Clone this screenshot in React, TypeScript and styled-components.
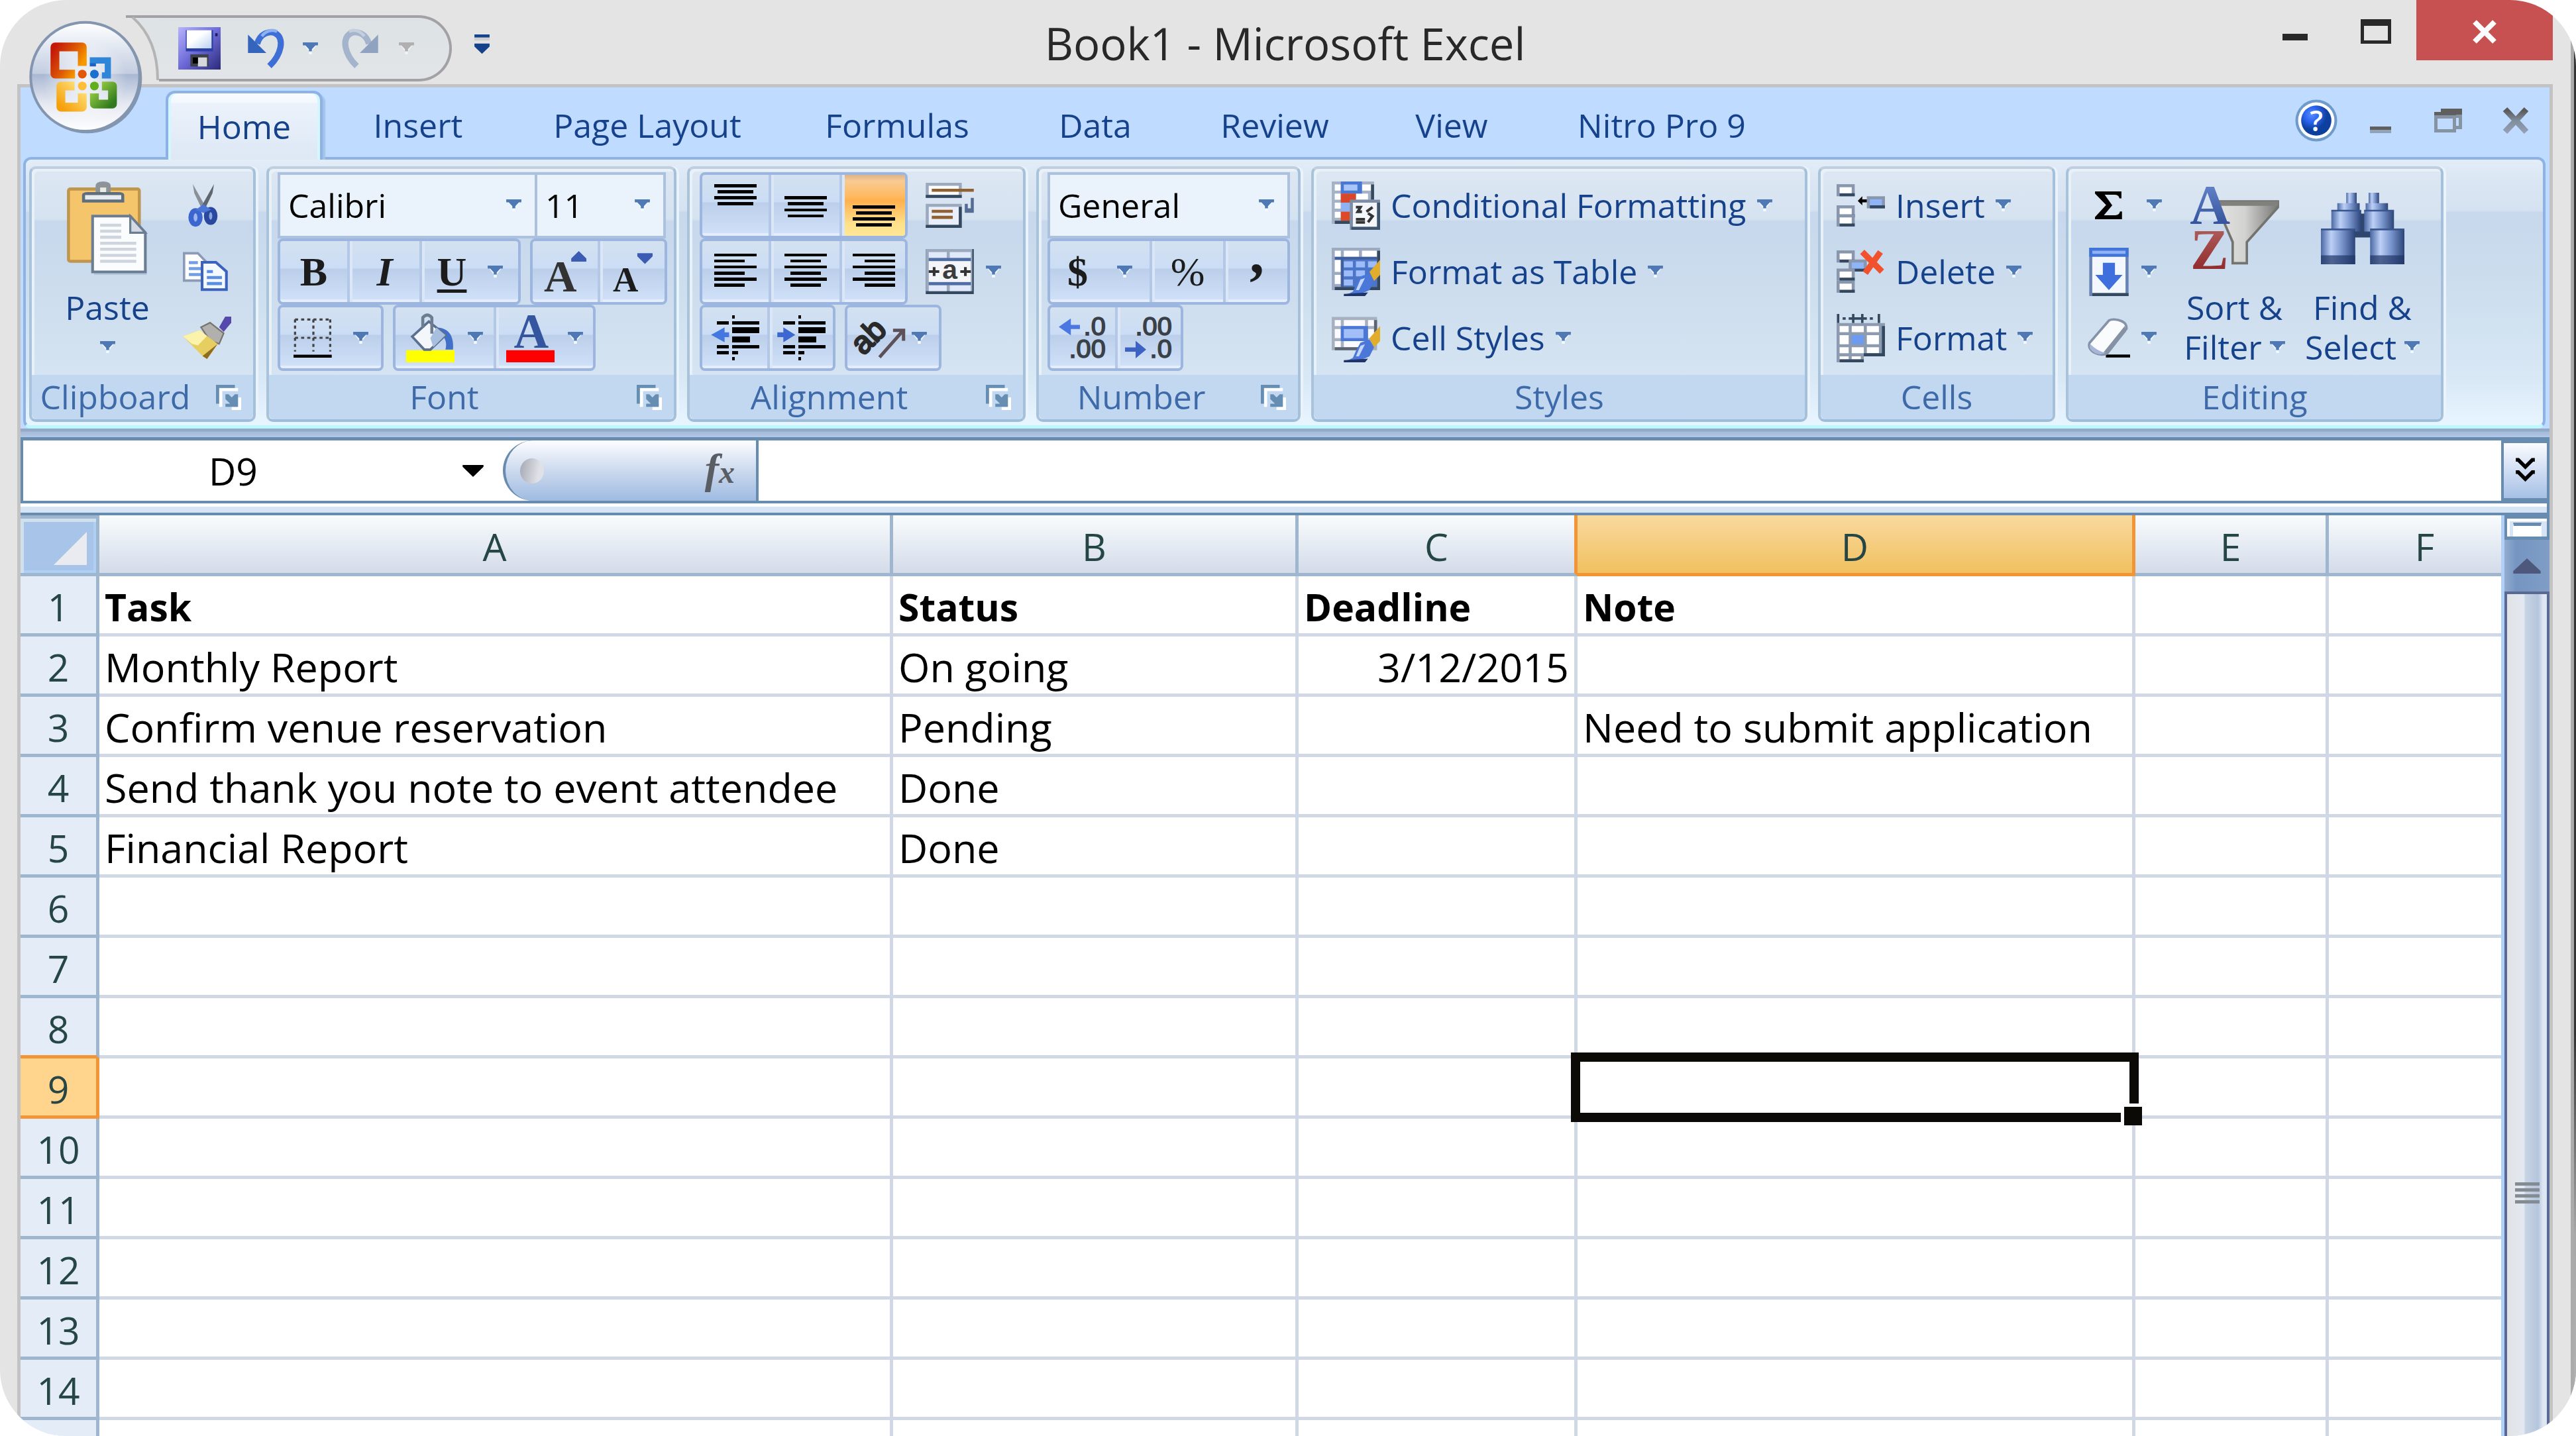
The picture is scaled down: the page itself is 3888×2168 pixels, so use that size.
import React from "react";
import styled, { createGlobalStyle, css } from "styled-components";

const Global = createGlobalStyle`
  * { box-sizing: border-box; }
  html, body { margin: 0; padding: 0; background: #ffffff; }
  body { font-family: "Open Sans", "Noto Sans", sans-serif; font-size: 50px; color: #000; }
  button, input, select { font: inherit; color: inherit; margin: 0; padding: 0; border: 0; background: none; border-radius: 0; outline: none; }
  svg { display: block; flex: none; overflow: visible; }
`;

/* ---------- window frame ---------- */

const Window = styled.div`
  position: relative;
  display: flex;
  flex-direction: column;
  height: 100vh;
  overflow: hidden;
  border-radius: 100px;
  background: #e4e4e4;
  padding: 0 35px 0 26px;

  &::after {
    content: "";
    position: absolute;
    top: 0;
    right: 0;
    bottom: 0;
    width: 8px;
    background:
      linear-gradient(#333 0, #333 72%, #a8a8a8 86%, #b4b4b4 100%) right / 3px 100% no-repeat,
      #ababab;
  }
`;

const TitleBar = styled.header`
  display: grid;
  grid-template-columns: 1fr auto 1fr;
  height: 127px;
  flex: none;
  margin-right: -9px;
  padding-right: 9px;
`;

const Title = styled.h1`
  margin: 0;
  padding-top: 20px;
  font-size: 67px;
  line-height: 90px;
  font-weight: 400;
  color: #282828;
  white-space: nowrap;
`;

const WindowButtons = styled.div`
  display: flex;
  justify-content: flex-end;
  align-items: flex-start;
`;

const WindowButton = styled.button<{ $close?: boolean }>`
  display: flex;
  align-items: center;
  justify-content: center;
  width: ${(p) => (p.$close ? 206 : 122)}px;
  height: 91px;
  padding-top: 4px;
  background: ${(p) => (p.$close ? "#c75050" : "transparent")};
`;

const QuickAccess = styled.div`
  display: flex;
  height: 100px;
  margin-top: 23px;
  padding-left: 164px;
`;

const QuickPill = styled.div`
  display: flex;
  align-items: center;
  width: 442px;
  margin-right: 34px;
  padding-left: 29px;
  border: 4px solid #a3a1a6;
  border-left: 0;
  border-radius: 0 50px 50px 0;
  background: linear-gradient(#dde2e4, #e1e5e7);
`;

const QuickButton = styled.button<{ $w: number }>`
  display: flex;
  align-items: center;
  width: ${(p) => p.$w}px;
  height: 90px;
`;

const OfficeButton = styled.button`
  position: absolute;
  left: 45px;
  top: 32px;
  width: 172px;
  height: 172px;
  z-index: 5;
`;

const Client = styled.div`
  display: flex;
  flex-direction: column;
  flex: 1;
  min-height: 0;
  border: 5px solid #c3c3c3;
  border-bottom: 0;
  background: #bfdbff;
`;

/* ---------- tabs ---------- */

const TabBar = styled.nav`
  display: flex;
  flex: none;
  height: 105px;
  padding-left: 219px;
`;

const Tab = styled.button<{ $w: number; $active?: boolean }>`
  width: ${(p) => p.$w}px;
  height: 104px;
  margin-top: 5px;
  color: #15428b;
  white-space: nowrap;
  ${(p) =>
    p.$active &&
    css`
      position: relative;
      z-index: 1;
      margin-right: 16px;
      border: 4px solid #8db2e3;
      border-bottom: 0;
      border-radius: 14px 14px 0 0;
      background: linear-gradient(#f8fbff 0, #f3f8fe 14%, #ebf2fb 15%, #dde8f5 100%);
      box-shadow: inset 4px 0 #d4f6ff, inset -4px 0 #d4f6ff, 4px 4px 2px #a3c2ea;
      clip-path: inset(0 -8px 0 0);
    `}
`;

const DocButtons = styled.div`
  display: flex;
  margin-left: auto;
  height: 100px;
`;

const DocButton = styled.button<{ $w: number; $end?: number }>`
  display: flex;
  align-items: center;
  justify-content: center;
  width: ${(p) => p.$w}px;
  margin-right: ${(p) => p.$end ?? 0}px;
`;

/* ---------- ribbon ---------- */

const Ribbon = styled.section`
  display: flex;
  flex: none;
  gap: 16px;
  height: 410px;
  margin: 0 6px 0 4px;
  padding: 10px 0 0 5px;
  border: 4px solid #8db2e3;
  border-bottom: 5px solid #bdf7ff;
  border-radius: 12px;
  background: linear-gradient(#e3edf8 0, #dae6f3 8%, #d5e2f1 19%, #c7d8ed 20%, #cddeee 50%, #d8e8f5 82%, #e7f5ff 100%);
`;

const RibbonShadow = styled.div`
  flex: none;
  height: 13px;
  background: linear-gradient(#93a9c6 0, #93a9c6 4px, #a5b9d9 5px, #b2c8e8 100%);
`;

const GroupBox = styled.div<{ $w: number }>`
  display: flex;
  flex-direction: column;
  width: ${(p) => p.$w}px;
  height: 386px;
  border: 4px solid;
  border-color: #bfcfde #a4c0da #9dbdda #a9c3db;
  border-radius: 10px;
  background: linear-gradient(#dde7f3 0, #d5e2f0 20%, #c7d8ed 21%, #cedeee 55%, #d8e8f5 100%);
  box-shadow: inset 4px 4px #e8f0f8, 4px 0 #eaf3fb;
`;

const GroupBody = styled.div<{ $left?: number }>`
  display: flex;
  flex: 1;
  min-height: 0;
  padding-left: ${(p) => p.$left ?? 0}px;
`;

const GroupFooter = styled.div`
  display: flex;
  align-items: center;
  height: 67px;
  border-radius: 0 0 8px 8px;
  background: #c1d8f0;
  color: #3e6aaa;
`;

const GroupLabel = styled.span<{ $shared?: boolean }>`
  flex: 1;
  padding-right: ${(p) => (p.$shared ? 26 : 0)}px;
  text-align: center;
  line-height: 67px;
`;

const Launcher = styled.button`
  width: 38px;
  height: 38px;
  margin-right: 18px;
`;

const Rows = styled.div`
  display: flex;
  flex-direction: column;
  padding-top: 5px;
`;

const Row = styled.div<{ $gap?: number }>`
  display: flex;
  height: 100px;
  gap: ${(p) => p.$gap ?? 14}px;
`;

const Segments = styled.div`
  display: flex;
  border: 4px solid #9cb6df;
  border-radius: 8px;
  overflow: hidden;
  background: linear-gradient(#d3e1f0 0, #cbddf5 44%, #bccfea 46%, #cfe0f8 96%, #e3edfb 96%);
`;

const Segment = styled.button<{ $w: number; $on?: boolean; $gap?: number }>`
  display: flex;
  align-items: center;
  justify-content: center;
  gap: ${(p) => p.$gap ?? 20}px;
  width: ${(p) => p.$w}px;
  & + & {
    border-left: 4px solid #b3c8e6;
    box-shadow: inset 4px 0 #dbe7f7;
  }
  ${(p) =>
    p.$on &&
    css`
      && {
        border-left: 0;
        box-shadow: none;
      }
      background: linear-gradient(#dcb28a 0, #f8cb92 10%, #ffb95f 36%, #ffb04e 42%, #ffe08a 80%, #ffe796 100%);
    `}
`;

const PlainButton = styled.button<{ $w: number }>`
  display: flex;
  align-items: center;
  gap: 18px;
  width: ${(p) => p.$w}px;
`;

const Combo = styled.label<{ $w: number; $joined?: boolean }>`
  display: grid;
  grid-template-columns: 1fr 23px;
  align-items: center;
  width: ${(p) => p.$w}px;
  height: 100px;
  padding-right: 20px;
  border: 4px solid #abc1de;
  border-left-width: ${(p) => (p.$joined ? 0 : 4)}px;
  background: #eaf2fb;

  select {
    appearance: none;
    grid-area: 1 / 1 / 2 / 3;
    width: 100%;
    height: 92px;
    padding-left: 12px;
  }
  svg {
    grid-area: 1 / 2;
    pointer-events: none;
  }
`;

const Glyph = styled.span<{ $size: number; $bold?: boolean; $italic?: boolean; $line?: boolean }>`
  font-family: "Liberation Serif", serif;
  font-size: ${(p) => p.$size}px;
  line-height: 76px;
  font-weight: ${(p) => (p.$bold ? 700 : 400)};
  font-style: ${(p) => (p.$italic ? "italic" : "normal")};
  text-decoration: ${(p) => (p.$line ? "underline" : "none")};
  text-decoration-thickness: 5px;
  text-underline-offset: 6px;
  color: #1c1c1c;
`;

const CommandButton = styled.button`
  display: flex;
  align-items: center;
  gap: 16px;
  height: 100px;
  color: #15428b;
  white-space: nowrap;
`;

const LargeButton = styled.button<{ $w: number }>`
  display: flex;
  flex-direction: column;
  align-items: center;
  width: ${(p) => p.$w}px;
  color: #15428b;
`;

const LargeIcon = styled.span`
  display: flex;
  align-items: center;
  height: 179px;
`;

const LargeLine = styled.span`
  display: flex;
  align-items: center;
  gap: 12px;
  height: 60px;
  line-height: 60px;
  white-space: nowrap;
`;

const SmallColumn = styled.div<{ $w: number; $left?: number }>`
  display: flex;
  flex-direction: column;
  width: ${(p) => p.$w}px;
  padding: 5px 0 0 ${(p) => p.$left ?? 0}px;
`;

const SmallButton = styled.button<{ $gap?: number }>`
  display: flex;
  align-items: center;
  gap: ${(p) => p.$gap ?? 18}px;
  height: 100px;
`;

const IconSlot = styled.span`
  display: flex;
  justify-content: center;
  width: 62px;
`;

/* ---------- formula bar ---------- */

const FormulaBar = styled.div`
  display: flex;
  flex: none;
  height: 100px;
  border: 4px solid #688caf;
  border-top-width: 5px;
  background: #ffffff;
  font-size: 57px;
`;

const NameInput = styled.input`
  width: 634px;
  height: 91px;
  text-align: center;
`;

const NameDrop = styled.button`
  display: flex;
  align-items: center;
  justify-content: center;
  width: 90px;
`;

const FxPill = styled.div`
  display: flex;
  align-items: center;
  justify-content: space-between;
  width: 386px;
  padding: 0 32px 0 22px;
  border: solid #688caf;
  border-width: 0 4px 0 4px;
  border-radius: 50px 0 0 50px;
  background: linear-gradient(#fdfdff, #c7d6ec 55%, #9fbbe2);
`;

const Knob = styled.span`
  width: 36px;
  height: 38px;
  border-radius: 50%;
  background: linear-gradient(100deg, #a4a8b2, #dfe1e6 75%);
`;

const FxButton = styled.button`
  font-family: "Liberation Serif", serif;
  font-style: italic;
  font-weight: 700;
  font-size: 64px;
  line-height: 80px;
  color: #5a5d63;
  small { font-size: 48px; }
`;

const FormulaInput = styled.input`
  flex: 1;
  min-width: 0;
  padding: 0 16px;
`;

const ExpandButton = styled.button`
  display: flex;
  align-items: center;
  justify-content: center;
  width: 69px;
  border: solid #688caf;
  border-width: 4px 0 4px 4px;
  background: linear-gradient(#fbfcff, #a6c0e6);
`;

const Splitter = styled.div`
  flex: none;
  height: 18px;
  border: solid #688caf;
  border-width: 0 4px 4px 0;
  background: linear-gradient(#ffffff 5px, #d6e5f5 5px);
`;

/* ---------- sheet ---------- */

const SheetArea = styled.main`
  display: flex;
  flex: 1;
  min-height: 0;
  overflow: hidden;
  background: #ffffff;
`;

const SheetClip = styled.div`
  flex: 1;
  min-width: 0;
  overflow: hidden;
`;

const Sheet = styled.table`
  width: calc(100% + 34px);
  table-layout: fixed;
  border-collapse: separate;
  border-spacing: 0;
  font-size: 57px;
  line-height: 80px;
`;

const Corner = styled.th`
  width: 119px;
  height: 92px;
  padding: 0;
  border: solid #9eb6ce;
  border-width: 5px 5px 5px 0;
  background: #a9c4e9;
  box-shadow: inset 5px 5px #cfe0ef, inset -4px -4px #b0cff5;
  svg { margin: 9px 0 0 50px; }
`;

const ColHead = styled.th<{ $w?: number; $on?: boolean; $beforeOn?: boolean }>`
  ${(p) => p.$w && `width: ${p.$w}px;`}
  height: 92px;
  padding: 7px 0 0;
  border: solid #9eb6ce;
  border-width: 0 5px 5px 0;
  font-weight: 400;
  color: #264646;
  background: linear-gradient(#f9fcfd, #d3dbe9);
  ${(p) => p.$beforeOn && "border-right-color: #f29536;"}
  ${(p) =>
    p.$on &&
    css`
      border-color: #f29536;
      background: linear-gradient(#f9d99f, #f1c15f);
    `}
`;

const RowHead = styled.th<{ $on?: boolean; $beforeOn?: boolean }>`
  height: 91px;
  padding: 6px 0 0;
  border: solid #9eb6ce;
  border-width: 0 5px 5px 0;
  font-weight: 400;
  color: #264646;
  background: #e4ecf7;
  ${(p) => p.$beforeOn && "border-bottom-color: #f29536;"}
  ${(p) =>
    p.$on &&
    css`
      border-color: #f29536;
      background: #ffd58d;
    `}
`;

const Cell = styled.td<{ $bold?: boolean; $right?: boolean }>`
  position: relative;
  height: 91px;
  padding: 6px 8px 0 8px;
  border: solid #d0d7e5;
  border-width: 0 5px 5px 0;
  font-size: ${(p) => (p.$bold ? 57 : 61)}px;
  font-weight: ${(p) => (p.$bold ? 700 : 400)};
  text-align: ${(p) => (p.$right ? "right" : "left")};
  white-space: nowrap;
`;

const Selection = styled.span`
  position: absolute;
  z-index: 2;
  left: -10px;
  top: -9px;
  right: -10px;
  bottom: -10px;
  border: 14px solid #0c0a06;

  &::after {
    content: "";
    position: absolute;
    right: -19px;
    bottom: -19px;
    width: 27px;
    height: 28px;
    border: solid #ffffff;
    border-width: 5px 0 0 5px;
    background: #0c0a06;
  }
`;

const ScrollColumn = styled.div`
  display: flex;
  flex-direction: column;
  width: 73px;
  flex: none;
  border-left: 5px solid #b0d0f7;
`;

const SplitBox = styled.div`
  height: 37px;
  padding: 6px 8px 0 9px;
  border: solid #688caf;
  border-width: 5px 4px 5px 4px;
  background: #d6e5f5;
  box-shadow: inset 4px 4px #ffffff;
  span {
    display: block;
    height: 21px;
    border: 1px solid #ffffff;
    border-top: 5px solid #688caf;
    background: #ffffff;
  }
`;

const ScrollUp = styled.button`
  display: flex;
  align-items: center;
  justify-content: center;
  height: 78px;
  background: linear-gradient(90deg, #94acd0, #7596c2 25%, #7f9dc6);
`;

const ScrollThumb = styled.div`
  position: relative;
  flex: 1;
  border: solid #586a94;
  border-width: 4px 4px 0 4px;
  background: linear-gradient(90deg, #e0e2e5 0, #e4e9f1 42%, #c7d4e4 46%, #b4c5dc 78%, #dde6f2 90%);
  display: flex;
  flex-direction: column;
  align-items: center;
  padding-top: 888px;
  gap: 4px;
  i {
    flex: none;
    width: 37px;
    height: 5px;
    background: #858b92;
  }
`;

/* ---------- icons ---------- */

const Caret = ({ color = "#4f79b5", shade = "#f4f9ff" }: { color?: string; shade?: string }) => (
  <svg width="23" height="18" viewBox="0 0 5 4" aria-hidden="true">
    <path d="M.5 1H4.500L3 3V4H2V3Z" fill={shade} />
    <path d="M0 0H5V.8H4L3 2V3H2V2L1 .8H0Z" fill={color} />
    <path d="M0 0H5V1H4.200L3 2.300H2L.8 1H0Z" fill={color} />
  </svg>
);

const Lines = ({ rows }: { rows: [number, number, number][] }) => (
  <svg width="64" height="64" viewBox="0 0 14 14" aria-hidden="true" shapeRendering="crispEdges">
    {rows.map(([x, y, w]) => (
      <rect key={y} x={x} y={y} width={w} height="1" />
    ))}
  </svg>
);

const spread = (top: number): [number, number, number][] => [
  [0, top, 14],
  [1, top + 2, 12],
  [0, top + 4, 14],
  [1, top + 6, 12],
];

const aligned = (indent: number): [number, number, number][] =>
  [1, 3, 5, 7, 9, 11].map((y, i) => (i % 2 ? [indent, y, 10] : [0, y, 14]) as [number, number, number]);

const OfficeLogo = () => (
  <svg width="172" height="172" viewBox="45 65 517 517" aria-hidden="true">
    <defs>
      <linearGradient id="orb" x1="0" y1="0" x2="0" y2="1">
        <stop offset="0" stopColor="#ffffff" />
        <stop offset=".25" stopColor="#dfe5f0" />
        <stop offset=".47" stopColor="#c3cde0" />
        <stop offset=".48" stopColor="#a9b8d3" />
        <stop offset=".75" stopColor="#e6e9f1" />
        <stop offset="1" stopColor="#ffffff" />
      </linearGradient>
      <radialGradient id="orbGlow">
        <stop offset="0" stopColor="#fff" stopOpacity=".85" />
        <stop offset="1" stopColor="#fff" stopOpacity="0" />
      </radialGradient>
      <linearGradient id="oRed" x1="0" y1="0" x2="1" y2=".6">
        <stop offset="0" stopColor="#c4190a" />
        <stop offset=".6" stopColor="#dd5a04" />
        <stop offset="1" stopColor="#f79a00" />
      </linearGradient>
      <linearGradient id="oYellow" x1="0" y1="1" x2="1" y2="0">
        <stop offset="0" stopColor="#f59f0a" />
        <stop offset="1" stopColor="#ffe27a" />
      </linearGradient>
      <linearGradient id="oGreen" x1="0" y1="0" x2="1" y2="1">
        <stop offset="0" stopColor="#9bcf45" />
        <stop offset="1" stopColor="#2f7a1c" />
      </linearGradient>
    </defs>
    <circle cx="304" cy="324" r="250" fill="#6f7f95" opacity=".75" />
    <circle cx="296" cy="317" r="247" fill="url(#orb)" stroke="#8495b0" strokeWidth="12" />
    <circle cx="296" cy="330" r="190" fill="url(#orbGlow)" />
    <path d="M250 305H159V182H283V268" fill="none" stroke="url(#oRed)" strokeWidth="40" strokeLinejoin="round" />
    <circle cx="283" cy="305" r="20" fill="#e2560a" />
    <path d="M317 243H399V311H372" fill="none" stroke="#2f86d8" strokeWidth="28" />
    <path d="M317 256H345V270H317Z" fill="#1a63c4" />
    <circle cx="338" cy="305" r="20" fill="#1b6fce" />
    <path d="M248 359H186V455H283V393" fill="none" stroke="url(#oYellow)" strokeWidth="40" strokeLinejoin="round" />
    <circle cx="283" cy="359" r="20" fill="#ffbd3a" />
    <path d="M372 359H420V441H338V393" fill="none" stroke="url(#oGreen)" strokeWidth="40" strokeLinejoin="round" />
    <circle cx="338" cy="359" r="20" fill="#63ae1c" />
  </svg>
);

const SaveIcon = () => (
  <svg width="64" height="64" viewBox="0 0 14 14" aria-hidden="true">
    <defs>
      <linearGradient id="disk" x1="0" y1="0" x2="1" y2="1">
        <stop offset="0" stopColor="#b6b4fb" />
        <stop offset=".5" stopColor="#6d6ad8" />
        <stop offset="1" stopColor="#2a2a78" />
      </linearGradient>
      <linearGradient id="diskLabel" x1="0" y1="0" x2="1" y2="1">
        <stop offset=".4" stopColor="#ffffff" />
        <stop offset="1" stopColor="#b9d0f2" />
      </linearGradient>
    </defs>
    <path d="M0 0H14V14H0Z" fill="url(#disk)" />
    <path d="M2.500 1H11.500V8H2.500Z" fill="#2b3fa4" />
    <path d="M2.800 1H11V7H2.800Z" fill="url(#diskLabel)" />
    <path d="M4 9H10V13H4Z" fill="#3c4048" />
    <path d="M6.500 10H9.500V13H6.500Z" fill="#d5d7da" />
    <path d="M4.800 10H6.500V12H4.800Z" fill="#000" />
    <path d="M12.200 2H13V3H12.200Z" fill="#1d1d60" />
  </svg>
);

const TurnArrow = ({ redo }: { redo?: boolean }) => (
  <svg width="56" height="60" viewBox="0 0 12 13" aria-hidden="true">
    <g transform={redo ? "translate(12 0) scale(-1 1)" : undefined}>
      <path
        d="M3 5C4 1.600 7 .6 9 1.600C12 3.200 11 8.500 7 12.300"
        fill="none"
        stroke={redo ? "#a3b4cc" : "#3d6fd6"}
        strokeWidth="2"
      />
      <path d="M0 2L6 8H0Z" fill={redo ? "#8fa3c0" : "#3564bd"} />
      <path d="M4.500 2.500C6 .5 8 .3 9.500 1" fill="none" stroke={redo ? "#c3cfdd" : "#8db2ee"} strokeWidth="1" />
    </g>
  </svg>
);

const QuickMore = () => (
  <svg width="23" height="32" viewBox="0 0 5 7" aria-hidden="true">
    <path d="M0 1H5V2H0Z" fill="#cfcfcf" />
    <path d="M0 0H5V1H0Z" fill="#15428b" />
    <path d="M0 3H5V4L2.500 6.400L0 4Z" fill="#15428b" />
  </svg>
);

const LauncherIcon = () => (
  <svg width="38" height="38" viewBox="0 0 8 8" aria-hidden="true">
    <path d="M1 7V1H7V2H2V7Z" fill="#fff" />
    <path d="M0 6V0H6V1H1V6Z" fill="#668eb2" />
    <path d="M8 4V8H5V7H7V4Z" fill="#fff" />
    <path d="M3 3H4L5 4L6 3H7V7H3V6H4.500L3 4.500Z" fill="#668eb2" />
  </svg>
);

const PasteIcon = () => (
  <svg width="123" height="141" viewBox="0 0 27 31" aria-hidden="true">
    <path d="M9 29H26.500V31H9Z" fill="#8aa0b8" opacity=".35" />
    <rect x=".5" y="2.500" width="23.500" height="24" rx=".6" fill="#f4c56a" stroke="#c0954e" />
    <path d="M9.500 4V1.500Q9.500 0 12 0T14.500 1.500V4Z" fill="#8d9499" />
    <path d="M11 3.800V2H13V3.800Z" fill="#ece9e0" />
    <path d="M5 4.500Q5 3.500 7 3.500H17Q19 3.500 19 4.500V7H5Z" fill="#5f6e7c" />
    <path d="M6 4.500H18V6H6Z" fill="#e8ecf0" />
    <path d="M8.500 11.500H21L26 17V30H8.500Z" fill="#fbfcfe" stroke="#6b7d92" strokeWidth=".9" />
    <path d="M21 11.500V17H26Z" fill="#d3dae3" stroke="#6b7d92" strokeWidth=".7" />
    <path d="M11 14H18V15H11ZM11 16H18V17H11ZM11 18H18V19H11ZM11 20H23V21H11ZM11 22H23V23H11ZM11 24H23V25H11ZM11 26H23V27H11Z" fill="#cfd5de" />
  </svg>
);

const CutIcon = () => (
  <svg width="46" height="64" viewBox="0 0 10 14" aria-hidden="true">
    <path d="M1.500 0L5.800 7.600L4.600 8.400L2 3Z" fill="#8a9097" />
    <path d="M8.500 0L4.200 7.600L5.400 8.400L8 3Z" fill="#5e6670" />
    <ellipse cx="2.400" cy="11" rx="1.500" ry="2.200" fill="#9db6ec" stroke="#3b66cf" strokeWidth="1.700" />
    <ellipse cx="7.400" cy="10.500" rx="1.400" ry="2.100" fill="#8aa6e2" stroke="#2a489f" strokeWidth="1.700" />
    <path d="M2.500 8.500L5 6.600L7.500 8.500L5 9.500Z" fill="#4b76d8" />
  </svg>
);

const CopyIcon = () => (
  <svg width="68" height="60" viewBox="0 0 15 13" aria-hidden="true">
    <path d="M.4 .4H5L8 3.500V9.500H.4Z" fill="#fff" stroke="#8b9bb5" strokeWidth=".8" />
    <path d="M2 3H5V4H2ZM2 5H6V6H2ZM2 7H6V8H2Z" fill="#6f9fe8" />
    <path d="M6.400 3.400H11L14.500 6.500V12.500H6.400Z" fill="#f4f8ff" stroke="#3b62bd" strokeWidth=".9" />
    <path d="M8 6H10V7H8ZM8 8H13V9H8ZM8 10H13V11H8Z" fill="#5b8de0" />
  </svg>
);

const PainterIcon = () => (
  <svg width="73" height="64" viewBox="0 0 16 14" aria-hidden="true">
    <path d="M12 3.500L14 0H16V2L13.500 5Z" fill="#5549ad" />
    <path d="M6 3.500L9 2L13.500 5.500L12 9L9 8Z" fill="#b2b0ac" stroke="#77746e" strokeWidth=".5" />
    <path d="M0 6.500L5.500 4.500L11.500 9L8 14L6.500 13Z" fill="#e7ce61" />
    <path d="M0 6.500L5.500 4.500L8 6.400L5 9.500L3 9Z" fill="#fbf3ac" />
    <path d="M6.500 13L11.500 9L8 14Z" fill="#8f6d1c" />
  </svg>
);

const BorderIcon = () => (
  <svg width="60" height="60" viewBox="0 0 13 13" aria-hidden="true">
    <path d="M.5 .5H12.500M.5 6.500H12.500M.5 .5V11M6.500 .5V11M12 .5V11" fill="none" stroke="#444" strokeWidth=".7" strokeDasharray="1 1" />
    <path d="M0 12H12.500V13H0Z" fill="#000" />
  </svg>
);

const FillIcon = () => (
  <svg width="73" height="73" viewBox="0 0 16 16" aria-hidden="true">
    <path d="M0 12H16V16H0Z" fill="#ffff00" />
    <path d="M10.500 4.500Q16 5 15.500 11.800H13Q14 8 10.500 6Z" fill="#4270c8" />
    <path d="M2 7.500L7.500 2.500L13 7L8 11.800H6Z" fill="#f3f6fb" stroke="#5b6f8e" strokeWidth=".8" />
    <path d="M9 11L13 7L10 4.500L8 8Z" fill="#a9bfe0" />
    <path d="M5.500 4.500V1.200Q7 -.5 8.500 1.200V6.500" fill="none" stroke="#6d7c90" strokeWidth="1" />
  </svg>
);

const FontColorIcon = () => (
  <svg width="73" height="73" viewBox="0 0 16 16" aria-hidden="true">
    <path d="M0 12H16V16H0Z" fill="#ff0000" />
    <text x="8.300" y="11.200" textAnchor="middle" fontFamily="Liberation Serif, serif" fontWeight="700" fontSize="16" fill="#35569f">A</text>
  </svg>
);

const GrowIcon = () => (
  <svg width="64" height="60" viewBox="0 0 14 13" aria-hidden="true">
    <text x="0" y="13" fontFamily="Liberation Serif, serif" fontWeight="700" fontSize="15" fill="#333">A</text>
    <path d="M9 3.200H14V2.200L11.500 -.3L9 2.200Z" fill="#3c5cb4" />
  </svg>
);

const ShrinkIcon = () => (
  <svg width="60" height="60" viewBox="0 0 13 13" aria-hidden="true">
    <text x="0" y="13" fontFamily="Liberation Serif, serif" fontWeight="700" fontSize="11.500" fill="#1c1c1c">A</text>
    <path d="M8 .5H13V1.500L10.500 4L8 1.500Z" fill="#3c5cb4" />
  </svg>
);

const CommaIcon = () => (
  <svg width="20" height="40" viewBox="0 0 20 40" aria-hidden="true">
    <text x="10" y="22" textAnchor="middle" fontFamily="Liberation Serif, serif" fontWeight="700" fontSize="88" fill="#1c1c1c">,</text>
  </svg>
);

const WrapIcon = () => (
  <svg width="73" height="68" viewBox="0 0 16 15" aria-hidden="true">
    <path d="M.5 .5H11.500V4.500H.5Z" fill="#fff" stroke="#9aa9bd" />
    <path d="M0 4H12V5H0Z" fill="#34495f" />
    <path d="M2 2H16V3H2Z" fill="#92602f" />
    <path d="M.5 7.500H11.500V14.500H.5Z" fill="#e8eefa" stroke="#9aa9bd" />
    <path d="M0 14H12V15H0ZM11 8H12V15H11Z" fill="#34495f" />
    <path d="M2 9H9V10H2ZM2 11H9V12H2Z" fill="#92602f" />
    <path d="M15 5H16V10H13V7H14V8.500H15Z" fill="#556c94" />
  </svg>
);

const MergeIcon = () => (
  <svg width="73" height="68" viewBox="0 0 16 15" aria-hidden="true">
    <path d="M0 0H16V15H0Z" fill="#34495f" />
    <path d="M0 0H15.500V14H0Z" fill="#9aa9bd" />
    <path d="M1 1H7V3H1ZM8 1H15V3H8ZM1 12H7V14H1ZM8 12H15V14H8Z" fill="#dfe9fa" />
    <path d="M1 3H15V4H1ZM1 11H15V12H1Z" fill="#4f6ea6" />
    <path d="M1 4H15V11H1Z" fill="#f4f5f8" />
    <path d="M1 7.500H4.500M11.500 7.500H15M2.800 6V9M13.200 6V9" stroke="#333" strokeWidth=".9" />
    <text x="8" y="10" textAnchor="middle" fontFamily="Liberation Sans, sans-serif" fontWeight="700" fontSize="9" fill="#3c3c3c">a</text>
  </svg>
);

const IndentIcon = ({ more }: { more?: boolean }) => (
  <svg width="73" height="68" viewBox="0 0 16 15" aria-hidden="true">
    <path d="M7 0H8V1H7ZM2 2H6V3H2ZM7 2H16V3H7ZM7 4H16V6H7ZM7 7H13V9H7ZM2 10H6V11H2ZM7 10H16V11H7ZM2 12H6V13H2ZM7 12H9V13H7ZM7 14H8V15H7Z" fill="#000" shapeRendering="crispEdges" />
    {more ? <path d="M0 5.700H2V4L6 6.500L2 9V7.300H0Z" fill="#3d68d0" /> : <path d="M6 5.700H4.500V4L0 6.500L4.500 9V7.300H6Z" fill="#4577e0" />}
  </svg>
);

const OrientationIcon = () => (
  <svg width="68" height="60" viewBox="0 0 15 13" aria-hidden="true">
    <g transform="rotate(-45 5 8)">
      <text x="-1" y="8.500" fontFamily="Liberation Sans, sans-serif" fontSize="10.500" fill="#2a2a2a" stroke="#2a2a2a" strokeWidth=".6">ab</text>
    </g>
    <path d="M6.500 13L14 4.500M11 4H14.500V7.500" fill="none" stroke="#5d5058" strokeWidth="1.100" />
  </svg>
);

const DecimalIcon = ({ less }: { less?: boolean }) => (
  <svg width="73" height="64" viewBox="0 0 16 14" aria-hidden="true" fontFamily="Liberation Sans, sans-serif" fontSize="8.700" fill="#3a4048" stroke="#3a4048" strokeWidth=".35">
    <text x="15.500" y="6.200" textAnchor="end">{less ? ".00" : ".0"}</text>
    <text x="15.500" y="13.500" textAnchor="end">{less ? ".0" : ".00"}</text>
    {less ? (
      <path d="M0 10.200H3.500V8L7 10.900L3.500 13.800V11.600H0Z" fill="#3c62c4" stroke="none" />
    ) : (
      <path d="M7 2.700H4V.6L0 3.400L4 6.200V4.100H7Z" fill="#4a78e0" stroke="none" />
    )}
  </svg>
);

const BrushTip = () => (
  <>
    <path d="M12.500 8L16 4V9L14 11Z" fill="#e2ad2a" />
    <path d="M9.500 9.500L12.500 8.500L14 11L12.500 14Q9 15.800 4 16L7 14.500Q8 12 9.500 9.500Z" fill="#4b78d8" />
    <path d="M9.500 10.500L11 10L9 14L8 14Z" fill="#c3d6fa" />
    <path d="M4 15.300L12 14.800L11 16H4Z" fill="#1f3468" />
  </>
);

const ConditionalIcon = () => (
  <svg width="73" height="73" viewBox="0 0 16 16" aria-hidden="true">
    <path d="M0 0H14V14H0Z" fill="#a5b1c5" />
    <path d="M1 1H3V3H1ZM1 4H3V6H1ZM1 7H3V9H1ZM1 10H3V12H1ZM10 1H13V3H10ZM8 4H12V6H8Z" fill="#fff" />
    <path d="M3 0H10V4H3Z" fill="#4778d2" />
    <path d="M4 1H8.500V3H4Z" fill="#a9c5f8" />
    <path d="M3 4H8V7H3Z" fill="#d8472a" />
    <path d="M3 7H6V10H3Z" fill="#8fb2f2" />
    <path d="M3 10H6V13H3Z" fill="#dd4a28" />
    <path d="M1 13H6V14H1ZM13 1H14V6H13Z" fill="#34495f" />
    <path d="M6.500 6.500H15.500V15.500H6.500Z" fill="#f2f5fb" stroke="#7d8da5" />
    <path d="M6.500 15H16V16H6.500ZM15 7H16V16H15Z" fill="#3d546e" />
    <path d="M8 8.500H9.500L8.600 10H10M13.500 8.500L11.500 10M12 10.500L13.500 11.500L12 13.500M8 12.500H11M8 13.500H11" fill="none" stroke="#333" strokeWidth=".9" />
  </svg>
);

const FormatTableIcon = () => (
  <svg width="73" height="73" viewBox="0 0 16 16" aria-hidden="true">
    <path d="M0 0H16V14H0Z" fill="#9dabc2" />
    <path d="M1 1H3V3H1ZM4 1H9V3H4ZM10 1H15V3H10ZM1 4H3V8H1ZM1 9H3V12H1Z" fill="#fff" />
    <path d="M1 3H15V4H1ZM3 3H4V13H3Z" fill="#3f5f9f" />
    <path d="M4 4H15V13H4Z" fill="#4a75c8" />
    <path d="M4 4.500H7V6.500H4ZM8 4.500H11V6.500H8ZM12 4.500H15V6.500H12ZM4 7.500H7V9.500H4ZM8 7.500H11V9.500H8ZM4 10.500H7V12.500H4Z" fill="#9ebcf8" />
    <path d="M1 13H16V14H1ZM15 1H16V14H15Z" fill="#34495f" />
    <BrushTip />
  </svg>
);

const CellStylesIcon = () => (
  <svg width="73" height="73" viewBox="0 0 16 16" aria-hidden="true">
    <path d="M0 1H15V12H0Z" fill="#a6b0bf" />
    <path d="M1 2H3V4H1ZM4 2H11V4H4ZM12 2H14V4H12ZM1 5H3V8H1ZM12 5H14V8H12ZM1 9H3V11H1ZM4 9H11V11H4Z" fill="#fbfbff" />
    <path d="M3 4H12V9H3Z" fill="#4b78d8" />
    <path d="M4 5H10.500V8H4Z" fill="#a3bff8" />
    <path d="M1 11H9V12H1ZM14 2H15V6H14Z" fill="#5b6470" />
    <BrushTip />
  </svg>
);

const Box = ({ x, y, blue }: { x: number; y: number; blue?: boolean }) => (
  <>
    <rect x={x} y={y} width="6" height="4" fill="#8897ad" />
    <rect x={x + 1} y={y + 3} width="5" height="1" fill="#34495f" />
    <rect x={x + 1} y={y + 1} width="4" height="2" fill={blue ? "#8fb4f8" : "#fff"} />
  </>
);

const InsertCellsIcon = () => (
  <svg width="73" height="64" viewBox="0 0 16 14" aria-hidden="true">
    <Box x={0} y={0} />
    <Box x={0} y={7} />
    <Box x={0} y={10} />
    <Box x={10} y={4} blue />
    <path d="M7 5.500L8.500 4V5H10V6H8.500V7Z" fill="#000" />
  </svg>
);

const DeleteCellsIcon = () => (
  <svg width="73" height="64" viewBox="0 0 16 14" aria-hidden="true">
    <Box x={0} y={0} />
    <Box x={4} y={3} blue />
    <Box x={0} y={6} />
    <Box x={0} y={10} />
    <path d="M8.500 .5L15 7M14.500 .5L9.500 7.500" stroke="#f2512e" strokeWidth="2" />
  </svg>
);

const FormatCellsIcon = () => (
  <svg width="73" height="73" viewBox="0 0 16 16" aria-hidden="true">
    <path d="M.5 0V3M14 0V3M5.500 0V3M8.500 0V3M2 1.500H3M4 1.500H10M11 1.500H12" stroke="#34495f" strokeWidth=".8" />
    <path d="M0 3H16V14H9V16H0Z" fill="#8d9bb0" />
    <path d="M1 4H4V6H1ZM5 4H9V6H5ZM10 4H14V6H10ZM1 7H4V10H1ZM10 7H14V10H10ZM1 11H4V13H1ZM5 11H9V13H5ZM10 11H14V13H10ZM1 14H4V15H1ZM5 14H8V15H5Z" fill="#fff" />
    <path d="M5 7H9V10H5Z" fill="#6e9bf2" />
    <path d="M15 4H16V14H15ZM9 13H16V14H9ZM1 15H9V16H1Z" fill="#34495f" />
  </svg>
);

const SigmaIcon = () => (
  <svg width="44" height="42" viewBox="0 0 10 10" aria-hidden="true">
    <path d="M0 0H9.500V2.500H8.800Q8.500 1.200 7 1.200H3.500L6.200 5L3.200 8.600H7.300Q8.700 8.500 9 7.200H9.700V10H0V9.200L4 4.900L0 .8Z" fill="#000" />
  </svg>
);

const FillDownIcon = () => (
  <svg width="60" height="73" viewBox="0 0 13 16" aria-hidden="true">
    <path d="M0 0H13V16H0Z" fill="#6883b4" />
    <path d="M0 0H13V3H0Z" fill="#4273d8" />
    <path d="M1 1H12V2H1Z" fill="#8fb2f5" />
    <path d="M1 3H12V15H1Z" fill="#f3f7ff" />
    <path d="M1 15H13V16H1Z" fill="#34495f" />
    <path d="M4.500 5H8.500V9H11L6.500 14L2 9H4.500Z" fill="#3f6fdc" />
  </svg>
);

const EraserIcon = () => (
  <svg width="64" height="60" viewBox="0 0 14 13" aria-hidden="true">
    <path d="M6 12H14V13H6Z" fill="#000" />
    <path d="M7 .8Q8 .2 10 .6Q13 1.300 12.800 3.500L6.500 11.600Q4.500 12.600 2 11.300Q0 10 .6 8.200Z" fill="#fafbfd" stroke="#8593a8" strokeWidth=".8" />
    <path d="M12.600 4.500L6.800 11.400L5 11.600L12.300 2.500Z" fill="#8492a4" />
    <path d="M.8 8.500Q3 10.800 6 11.500Q3.500 12.600 1.600 11Q.3 10 .8 8.500Z" fill="#a6b6d8" />
  </svg>
);

const SortIcon = () => (
  <svg width="134" height="132" viewBox="0 0 29.400 29" aria-hidden="true">
    <defs>
      <linearGradient id="funnel" x1="0" x2="1">
        <stop offset="0" stopColor="#e2e2e0" />
        <stop offset=".45" stopColor="#d2d2d0" />
        <stop offset="1" stopColor="#787876" />
      </linearGradient>
      <linearGradient id="sortA" x1="0" y1="0" x2="0" y2="1">
        <stop offset="0" stopColor="#6f8fd4" />
        <stop offset="1" stopColor="#26458f" />
      </linearGradient>
      <linearGradient id="sortZ" x1="0" y1="0" x2="0" y2="1">
        <stop offset="0" stopColor="#b56a64" />
        <stop offset="1" stopColor="#8a1c20" />
      </linearGradient>
    </defs>
    <path d="M9 5.500H29V7.500L18.700 19V26H14V19L9 7.500Z" fill="url(#funnel)" stroke="#73736f" strokeWidth=".8" />
    <path d="M9 5.500H29V7H9Z" fill="#80807c" />
    <text x="-.2" y="13" fontFamily="Liberation Serif, serif" fontWeight="700" fontSize="18.500" fill="url(#sortA)">A</text>
    <text x="0" y="28" fontFamily="Liberation Serif, serif" fontWeight="700" fontSize="19" fill="url(#sortZ)">Z</text>
  </svg>
);

const FindIcon = () => (
  <svg width="126" height="110" viewBox="0 0 28 24" aria-hidden="true">
    <defs>
      <linearGradient id="barrel" x1="0" x2="1">
        <stop offset="0" stopColor="#4a68a4" />
        <stop offset=".3" stopColor="#bdd0f6" />
        <stop offset=".6" stopColor="#7d98cf" />
        <stop offset="1" stopColor="#2b4478" />
      </linearGradient>
    </defs>
    <path d="M11 7H17V15H11Z" fill="#2f466f" />
    <g fill="url(#barrel)">
      <path d="M8.500 0H12V4H8.500Z" />
      <path d="M5.500 3.500H13V7H5.500Z" />
      <path d="M3.500 6H13.500V13H3.500Z" />
      <path d="M0 12H11.500V24H0Z" />
      <path d="M16 0H19.500V4H16Z" />
      <path d="M15 3.500H22.500V7H15Z" />
      <path d="M14.500 6H24.500V13H14.500Z" />
      <path d="M16.500 12H28V24H16.500Z" />
    </g>
    <path d="M0 21H11.500V24H0ZM16.500 21H28V24H16.500Z" fill="#1f3566" opacity=".7" />
    <path d="M3.500 6H13.500M14.500 6H24.500M0 12.300H11.500M16.500 12.300H28" stroke="#3a568f" strokeWidth=".6" />
  </svg>
);

const HelpIcon = () => (
  <svg width="64" height="64" viewBox="0 0 14 14" aria-hidden="true">
    <defs>
      <radialGradient id="help" cx=".35" cy=".3">
        <stop offset="0" stopColor="#5b8dff" />
        <stop offset=".5" stopColor="#2a63ee" />
        <stop offset="1" stopColor="#0d3f9e" />
      </radialGradient>
    </defs>
    <circle cx="7" cy="7" r="6.900" fill="#6f9bca" />
    <circle cx="7" cy="7" r="6" fill="#fff" />
    <circle cx="7" cy="7" r="5" fill="url(#help)" />
    <text x="7" y="10.400" textAnchor="middle" fontFamily="Open Sans, sans-serif" fontWeight="600" fontSize="9.500" fill="#fff">?</text>
  </svg>
);

/* ---------- content ---------- */

const tabs: [string, number][] = [
  ["Home", 237],
  ["Insert", 256],
  ["Page Layout", 436],
  ["Formulas", 318],
  ["Data", 280],
  ["Review", 262],
  ["View", 272],
  ["Nitro Pro 9", 362],
];

const columns: { name: string; w?: number }[] = [
  { name: "A", w: 1198 },
  { name: "B", w: 612 },
  { name: "C", w: 421 },
  { name: "D", w: 842 },
  { name: "E", w: 292 },
  { name: "F" },
];

const cells: Record<string, string> = {
  A1: "Task",
  B1: "Status",
  C1: "Deadline",
  D1: "Note",
  A2: "Monthly Report",
  B2: "On going",
  C2: "3/12/2015",
  A3: "Confirm venue reservation",
  B3: "Pending",
  D3: "Need to submit application",
  A4: "Send thank you note to event attendee",
  B4: "Done",
  A5: "Financial Report",
  B5: "Done",
};

const rowNumbers = Array.from({ length: 15 }, (_, i) => i + 1);

type GroupProps = { label: string; w: number; left?: number; launcher?: boolean; children: React.ReactNode };

const Group = ({ label, w, left, launcher, children }: GroupProps) => (
  <GroupBox $w={w} role="group" aria-label={label}>
    <GroupBody $left={left}>{children}</GroupBody>
    <GroupFooter>
      <GroupLabel $shared={launcher}>{label}</GroupLabel>
      {launcher && (
        <Launcher aria-label={`${label} options`}>
          <LauncherIcon />
        </Launcher>
      )}
    </GroupFooter>
  </GroupBox>
);

type PickProps = { label: string; value: string; w: number; joined?: boolean };

const Pick = ({ label, value, w, joined }: PickProps) => (
  <Combo $w={w} $joined={joined}>
    <select aria-label={label} defaultValue={value}>
      <option>{value}</option>
    </select>
    <Caret />
  </Combo>
);

const Command = ({ icon, label }: { icon: React.ReactNode; label: string }) => (
  <CommandButton>
    {icon}
    <span>{label}</span>
    <Caret />
  </CommandButton>
);

export default function App() {
  return (
    <>
      <Global />
      <Window>
        <OfficeButton aria-label="Office menu">
          <OfficeLogo />
        </OfficeButton>
        <TitleBar>
          <QuickAccess>
            <svg width="50" height="100" viewBox="0 0 50 100" aria-hidden="true">
              <path d="M0 2H50V98H49C50 55 34 24 10 3Z" fill="#dee3e5" />
              <path d="M0 2H50" stroke="#a3a1a6" strokeWidth="4" />
              <path d="M10 3C34 24 48 55 48 98" fill="none" stroke="#b4b4b4" strokeWidth="4" />
            </svg>
            <QuickPill>
              <QuickButton $w={105} aria-label="Save"><SaveIcon /></QuickButton>
              <QuickButton $w={83} aria-label="Undo"><TurnArrow /></QuickButton>
              <QuickButton $w={58} aria-label="Undo history"><Caret /></QuickButton>
              <QuickButton $w={87} aria-label="Redo"><TurnArrow redo /></QuickButton>
              <QuickButton $w={23} aria-label="Redo history"><Caret color="#b0b0b0" shade="#f2f2f2" /></QuickButton>
            </QuickPill>
            <QuickButton $w={40} aria-label="Customize toolbar"><QuickMore /></QuickButton>
          </QuickAccess>
          <Title>Book1 - Microsoft Excel</Title>
          <WindowButtons>
            <WindowButton aria-label="Minimize">
              <svg width="38" height="26" viewBox="0 0 38 26"><path d="M0 16H38V26H0Z" fill="#282828" /></svg>
            </WindowButton>
            <WindowButton aria-label="Maximize">
              <svg width="46" height="37" viewBox="0 0 46 37"><path fillRule="evenodd" d="M0 0H46V37H0ZM5 10V32H41V10Z" fill="#282828" /></svg>
            </WindowButton>
            <WindowButton $close aria-label="Close">
              <svg width="38" height="34" viewBox="0 0 38 34"><path d="M4 2L34 32M34 2L4 32" fill="none" stroke="#fff" strokeWidth="8" /></svg>
            </WindowButton>
          </WindowButtons>
        </TitleBar>
        <Client>
          <TabBar>
            {tabs.map(([name, w], i) => (
              <Tab key={name} $w={w} $active={i === 0}>{name}</Tab>
            ))}
            <DocButtons>
              <DocButton $w={64} $end={14} aria-label="Help"><HelpIcon /></DocButton>
              <DocButton $w={102} aria-label="Minimize workbook">
                <svg width="32" height="38" viewBox="0 0 32 38"><path d="M0 28H32V33H0Z" fill="#5f5f5f" /><path d="M0 33H32V38H0Z" fill="#92a3b7" /></svg>
              </DocButton>
              <DocButton $w={102} aria-label="Restore workbook">
                <svg width="42" height="36" viewBox="0 0 42 36">
                  <path fillRule="evenodd" d="M10 0H42V31H33V26H37V14H33V10H10Z" fill="#8593a3" />
                  <path d="M10 0H42V9H10Z" fill="#5f5f5f" />
                  <path fillRule="evenodd" d="M0 5H33V36H0ZM5 15V31H28V15Z" fill="#8593a3" />
                  <path d="M0 5H33V10H0Z" fill="#5f5f5f" />
                </svg>
              </DocButton>
              <DocButton $w={102} aria-label="Close workbook">
                <svg width="42" height="38" viewBox="0 0 42 38">
                  <defs>
                    <linearGradient id="docx" gradientUnits="userSpaceOnUse" x1="0" y1="0" x2="0" y2="38">
                      <stop offset=".1" stopColor="#5a5a5a" />
                      <stop offset=".5" stopColor="#7f8d9c" />
                      <stop offset="1" stopColor="#96a0b8" />
                    </linearGradient>
                  </defs>
                  <path d="M5 2L37 36M37 2L5 36" fill="none" stroke="url(#docx)" strokeWidth="9" />
                </svg>
              </DocButton>
            </DocButtons>
          </TabBar>

          <Ribbon>
            <Group label="Clipboard" w={342} launcher>
              <LargeButton $w={228}>
                <LargeIcon><PasteIcon /></LargeIcon>
                <LargeLine>Paste</LargeLine>
                <LargeLine><Caret /></LargeLine>
              </LargeButton>
              <SmallColumn $w={74}>
                <SmallButton aria-label="Cut"><IconSlot><CutIcon /></IconSlot></SmallButton>
                <SmallButton aria-label="Copy"><CopyIcon /></SmallButton>
                <SmallButton aria-label="Format painter"><PainterIcon /></SmallButton>
              </SmallColumn>
            </Group>

            <Group label="Font" w={619} left={13} launcher>
              <Rows>
                <Row $gap={0}>
                  <Pick label="Font name" value="Calibri" w={392} />
                  <Pick label="Font size" value="11" w={194} joined />
                </Row>
                <Row>
                  <Segments>
                    <Segment $w={101} aria-label="Bold"><Glyph $size={62} $bold>B</Glyph></Segment>
                    <Segment $w={109} aria-label="Italic"><Glyph $size={62} $bold $italic>I</Glyph></Segment>
                    <Segment $w={149} $gap={32} aria-label="Underline"><Glyph $size={62} $bold $line>U</Glyph><Caret /></Segment>
                  </Segments>
                  <Segments>
                    <Segment $w={98} aria-label="Grow font"><GrowIcon /></Segment>
                    <Segment $w={101} aria-label="Shrink font"><ShrinkIcon /></Segment>
                  </Segments>
                </Row>
                <Row>
                  <Segments>
                    <Segment $w={152} $gap={30} aria-label="Borders"><BorderIcon /><Caret /></Segment>
                  </Segments>
                  <Segments>
                    <Segment $w={148} aria-label="Fill color"><FillIcon /><Caret /></Segment>
                    <Segment $w={150} aria-label="Font color"><FontColorIcon /><Caret /></Segment>
                  </Segments>
                </Row>
              </Rows>
            </Group>

            <Group label="Alignment" w={511} left={15} launcher>
              <Rows>
                <Row $gap={27}>
                  <Segments>
                    <Segment $w={100} aria-label="Top align"><Lines rows={spread(0)} /></Segment>
                    <Segment $w={107} aria-label="Middle align"><Lines rows={spread(4)} /></Segment>
                    <Segment $w={99} $on aria-label="Bottom align"><Lines rows={spread(7)} /></Segment>
                  </Segments>
                  <PlainButton $w={73} aria-label="Wrap text"><WrapIcon /></PlainButton>
                </Row>
                <Row $gap={27}>
                  <Segments>
                    <Segment $w={100} aria-label="Align left"><Lines rows={aligned(0)} /></Segment>
                    <Segment $w={107} aria-label="Center"><Lines rows={aligned(2)} /></Segment>
                    <Segment $w={99} aria-label="Align right"><Lines rows={aligned(4)} /></Segment>
                  </Segments>
                  <PlainButton $w={115} aria-label="Merge and center"><MergeIcon /><Caret /></PlainButton>
                </Row>
                <Row>
                  <Segments>
                    <Segment $w={98} aria-label="Decrease indent"><IndentIcon /></Segment>
                    <Segment $w={99} aria-label="Increase indent"><IndentIcon more /></Segment>
                  </Segments>
                  <Segments>
                    <Segment $w={138} $gap={10} aria-label="Orientation"><OrientationIcon /><Caret /></Segment>
                  </Segments>
                </Row>
              </Rows>
            </Group>

            <Group label="Number" w={399} left={13} launcher>
              <Rows>
                <Row>
                  <Pick label="Number format" value="General" w={366} />
                </Row>
                <Row>
                  <Segments>
                    <Segment $w={150} $gap={44} aria-label="Accounting format"><Glyph $size={62} $bold>$</Glyph><Caret /></Segment>
                    <Segment $w={111} aria-label="Percent"><Glyph $size={62}>%</Glyph></Segment>
                    <Segment $w={97} aria-label="Comma style"><CommaIcon /></Segment>
                  </Segments>
                </Row>
                <Row>
                  <Segments>
                    <Segment $w={98} aria-label="Increase decimal"><DecimalIcon /></Segment>
                    <Segment $w={99} aria-label="Decrease decimal"><DecimalIcon less /></Segment>
                  </Segments>
                </Row>
              </Rows>
            </Group>

            <Group label="Styles" w={749} left={27}>
              <Rows>
                <Command icon={<ConditionalIcon />} label="Conditional Formatting" />
                <Command icon={<FormatTableIcon />} label="Format as Table" />
                <Command icon={<CellStylesIcon />} label="Cell Styles" />
              </Rows>
            </Group>

            <Group label="Cells" w={358} left={24}>
              <Rows>
                <Command icon={<InsertCellsIcon />} label="Insert" />
                <Command icon={<DeleteCellsIcon />} label="Delete" />
                <Command icon={<FormatCellsIcon />} label="Format" />
              </Rows>
            </Group>

            <Group label="Editing" w={570}>
              <SmallColumn $w={154} $left={30}>
                <SmallButton $gap={26} aria-label="Sum"><IconSlot><SigmaIcon /></IconSlot><Caret /></SmallButton>
                <SmallButton aria-label="Fill"><IconSlot><FillDownIcon /></IconSlot><Caret /></SmallButton>
                <SmallButton aria-label="Clear"><IconSlot><EraserIcon /></IconSlot><Caret /></SmallButton>
              </SmallColumn>
              <LargeButton $w={193}>
                <LargeIcon><SortIcon /></LargeIcon>
                <LargeLine>Sort &amp;</LargeLine>
                <LargeLine>Filter <Caret /></LargeLine>
              </LargeButton>
              <LargeButton $w={193}>
                <LargeIcon><FindIcon /></LargeIcon>
                <LargeLine>Find &amp;</LargeLine>
                <LargeLine>Select <Caret /></LargeLine>
              </LargeButton>
            </Group>
          </Ribbon>
          <RibbonShadow />

          <FormulaBar>
            <NameInput aria-label="Name box" defaultValue="D9" />
            <NameDrop aria-label="Names">
              <svg width="32" height="18" viewBox="0 0 7 4"><path d="M0 0H7V.6L3.500 4L0 .6Z" fill="#000" /></svg>
            </NameDrop>
            <FxPill>
              <Knob />
              <FxButton aria-label="Insert function">f<small>x</small></FxButton>
            </FxPill>
            <FormulaInput aria-label="Formula" />
            <ExpandButton aria-label="Expand formula bar">
              <svg width="33" height="37" viewBox="0 0 7 8"><path d="M.4 .5H1.200L3.500 2.800L5.800 .5H6.600M.4 4.500H1.200L3.500 6.800L5.800 4.500H6.600" fill="none" stroke="#000" strokeWidth="1.200" /></svg>
            </ExpandButton>
          </FormulaBar>
          <Splitter />

          <SheetArea>
            <SheetClip>
              <Sheet>
                <thead>
                  <tr>
                    <Corner aria-label="Select all">
                      <svg width="52" height="52" viewBox="0 0 52 52"><path d="M50 0V50H0Z" fill="#e9ebf1" /></svg>
                    </Corner>
                    {columns.map((c) => (
                      <ColHead key={c.name} $w={c.w} $on={c.name === "D"} $beforeOn={c.name === "C"}>
                        {c.name}
                      </ColHead>
                    ))}
                  </tr>
                </thead>
                <tbody>
                  {rowNumbers.map((r) => (
                    <tr key={r}>
                      <RowHead $on={r === 9} $beforeOn={r === 8}>{r}</RowHead>
                      {columns.map((c) => (
                        <Cell key={c.name} $bold={r === 1} $right={c.name === "C" && r > 1}>
                          {cells[c.name + r]}
                          {c.name === "D" && r === 9 && <Selection />}
                        </Cell>
                      ))}
                    </tr>
                  ))}
                </tbody>
              </Sheet>
            </SheetClip>
            <ScrollColumn>
              <SplitBox><span /></SplitBox>
              <ScrollUp aria-label="Scroll up">
                <svg width="42" height="23" viewBox="0 0 9 5"><path d="M4.500 0L9 4.200V5H0V4.200Z" fill="#4d587c" /></svg>
              </ScrollUp>
              <ScrollThumb><i /><i /><i /><i /></ScrollThumb>
            </ScrollColumn>
          </SheetArea>
        </Client>
      </Window>
    </>
  );
}
